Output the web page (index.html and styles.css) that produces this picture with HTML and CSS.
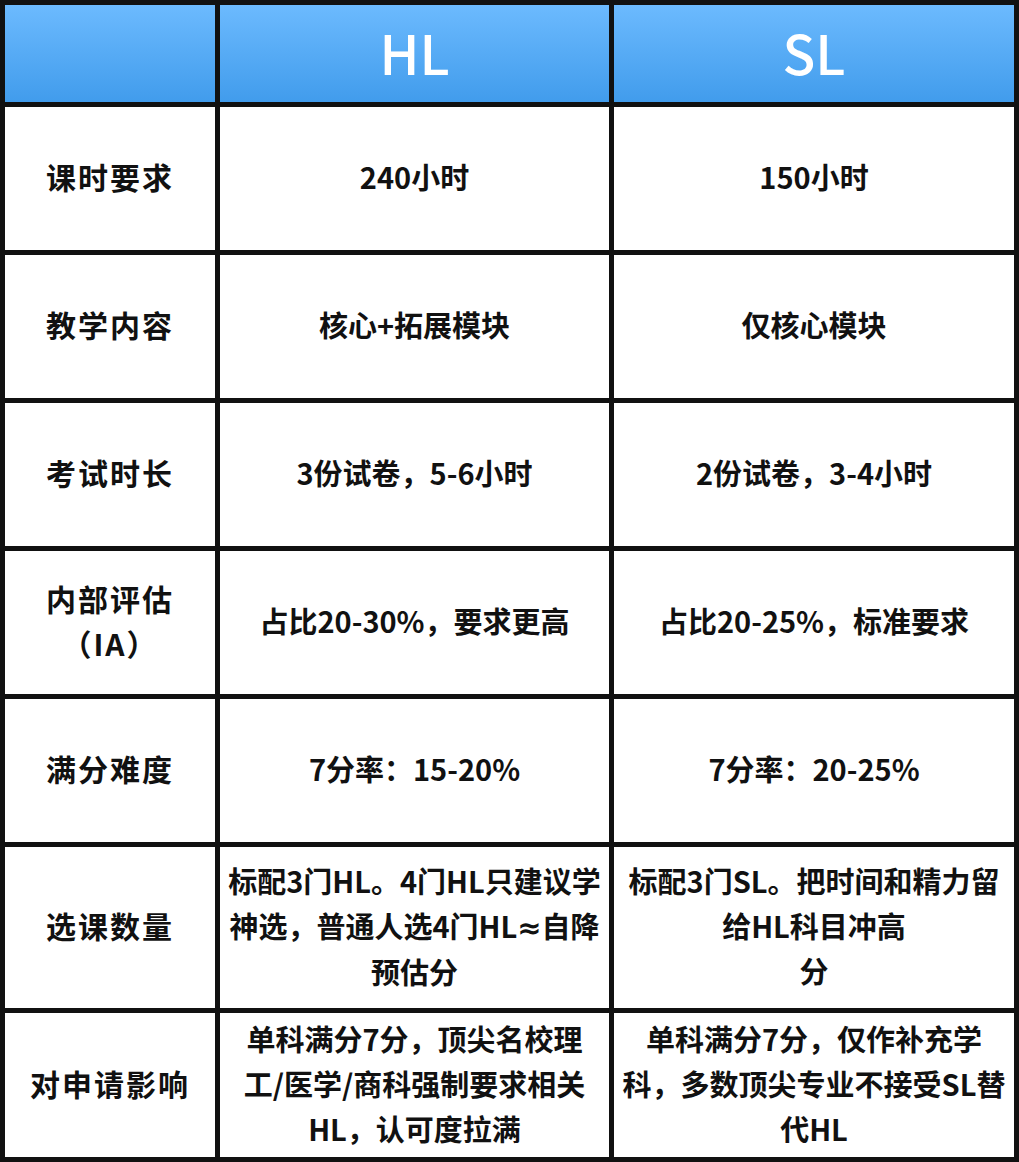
FILE: index.html
```html
<!DOCTYPE html>
<html lang="zh-CN">
<head>
<meta charset="utf-8">
<title>HL vs SL</title>
<link rel="stylesheet" href="styles.css">
</head>
<body>
<div class="table">
  <div class="cell head"></div>
  <div class="cell head">HL</div>
  <div class="cell head">SL</div>

  <div class="cell label">课时要求</div>
  <div class="cell">240小时</div>
  <div class="cell">150小时</div>

  <div class="cell label">教学内容</div>
  <div class="cell">核心+拓展模块</div>
  <div class="cell">仅核心模块</div>

  <div class="cell label">考试时长</div>
  <div class="cell">3份试卷，5-6小时</div>
  <div class="cell">2份试卷，3-4小时</div>

  <div class="cell label">内部评估<br>（IA）</div>
  <div class="cell">占比20-30%，要求更高</div>
  <div class="cell">占比20-25%，标准要求</div>

  <div class="cell label">满分难度</div>
  <div class="cell">7分率：15-20%</div>
  <div class="cell">7分率：20-25%</div>

  <div class="cell label">选课数量</div>
  <div class="cell"><p class="in">标配3门HL。4门HL只建议学<br>神选，普通人选4门HL<span class="sym">≈</span>自降<br>预估分</p></div>
  <div class="cell">标配3门SL。把时间和精力留<br>给HL科目冲高<br>分</div>

  <div class="cell label">对申请影响</div>
  <div class="cell">单科满分7分，顶尖名校理<br>工/医学/商科强制要求相关<br>HL，认可度拉满</div>
  <div class="cell">单科满分7分，仅作补充学<br>科，多数顶尖专业不接受SL替<br>代HL</div>
</div>
</body>
</html>
```

FILE: styles.css
```css
html, body {
  margin: 0;
  padding: 0;
  background: #ffffff;
}

.table {
  width: 1019px;
  box-sizing: border-box;
  display: grid;
  grid-template-columns: 210px 389px 400px;
  grid-template-rows: 97px 143px 143px 143px 143px 143px 161px 144px;
  gap: 5px;
  padding: 5px;
  background: #111111;
  font-family: "Noto Sans CJK SC", "Noto Sans", sans-serif;
}

.cell {
  background: #ffffff;
  color: #111111;
  display: flex;
  align-items: center;
  justify-content: center;
  text-align: center;
  font-size: 29px;
  font-weight: 700;
  line-height: 45px;
  padding-bottom: 4px;
  box-sizing: border-box;
}

.in {
  margin: 0;
}

.label {
  font-size: 30px;
  letter-spacing: 2px;
}

.sym {
  font-family: "Noto Sans", "DejaVu Sans", sans-serif;
}

.head {
  background: linear-gradient(to bottom, #6cbafe 0%, #419cec 100%);
  color: #ffffff;
  font-size: 54px;
  font-weight: 500;
  line-height: 1;
  padding-bottom: 4px;
}
```
